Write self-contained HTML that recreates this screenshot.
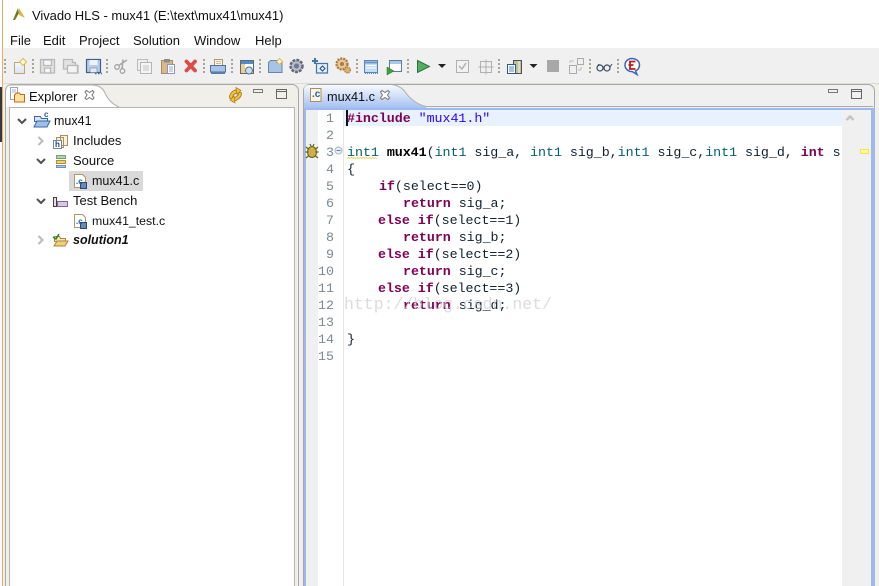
<!DOCTYPE html>
<html><head><meta charset="utf-8"><style>
html,body{margin:0;padding:0;width:879px;height:586px;overflow:hidden;background:#f0f0f0}
*{box-sizing:border-box}
#w{position:relative;width:879px;height:586px;overflow:hidden;background:#f0efe9}
.a{position:absolute;white-space:pre}
.u{font:13px/16px "Liberation Sans",sans-serif;color:#111}
.m{font:13.33px/17px "Liberation Mono",monospace;color:#10202c;letter-spacing:-.04px}
.n{font:13.33px/17px "Liberation Mono",monospace;color:#7d8890;width:16px;text-align:right;left:318px}
b{font-weight:bold;color:#000}
.k{color:#7f0055;font-weight:bold}
.t{color:#005f6a}
.s{color:#2a00ff}
</style></head><body><div id="w">
<div class="a" style="left:0;top:0;width:879px;height:48px;background:#fff"></div>
<div class="a" style="left:0;top:48px;width:879px;height:35px;background:#f0f0f0"></div>
<div class="a" style="left:0;top:83px;width:879px;height:1px;background:#dddcd4"></div>
<div class="a" style="left:0;top:48px;width:2px;height:538px;background:#fbfbfb"></div>
<div class="a" style="left:0;top:87px;width:2px;height:55px;background:#38383a"></div>
<div class="a" style="left:2px;top:0;width:1px;height:586px;background:#e8ac68"></div>
<div class="a u" style="left:32px;top:8px;letter-spacing:-.05px">Vivado HLS - mux41 (E:\text\mux41\mux41)</div>
<div class="a u" style="left:10px;top:33px">File</div>
<div class="a u" style="left:43px;top:33px">Edit</div>
<div class="a u" style="left:79px;top:33px">Project</div>
<div class="a u" style="left:133px;top:33px">Solution</div>
<div class="a u" style="left:194px;top:33px">Window</div>
<div class="a u" style="left:255px;top:33px">Help</div>

<!-- left panel -->
<div class="a" style="left:5px;top:84px;width:294px;height:520px;background:#f0efe9;border:1px solid #a8a8a8;border-radius:7px 7px 0 0"></div>
<div class="a" style="left:9px;top:107px;width:286px;height:500px;background:#fff;border:1px solid #b4b4b4"></div>
<!-- right panel -->
<div class="a" style="left:303px;top:84px;width:572px;height:520px;background:#f0f0f0;border:1px solid #a8a8a8;border-radius:7px 7px 0 0"></div>
<div class="a" style="left:304px;top:108px;width:2px;height:478px;background:#9db9ee"></div>
<div class="a" style="left:304px;top:108px;width:571px;height:2px;background:#9db9ee"></div>
<div class="a" style="left:871px;top:108px;width:4px;height:478px;background:#9db9ee"></div>
<div class="a" style="left:306px;top:110px;width:12px;height:476px;background:#f0f0f0"></div>
<div class="a" style="left:318px;top:110px;width:553px;height:476px;background:#fff"></div>
<div class="a" style="left:343px;top:110px;width:1px;height:476px;background:#e6e6e6"></div>
<div class="a" style="left:344px;top:110px;width:498px;height:16px;background:#e8f2fe"></div>
<div class="a" style="left:842px;top:110px;width:29px;height:476px;background:#f0f0f0"></div>

<svg class="a" style="left:0;top:0" width="879" height="586" viewBox="0 0 879 586" fill="none">
<defs><linearGradient id="tg" x1="0" y1="0" x2="0" y2="1"><stop offset="0" stop-color="#f8fafe"/><stop offset="1" stop-color="#a4c0f2"/></linearGradient>
<linearGradient id="pg" x1="0" y1="0" x2="0" y2="1"><stop offset="0" stop-color="#f6f8fc"/><stop offset="1" stop-color="#d8e4f4"/></linearGradient></defs>
<!-- logo -->
<path d="M13 20 L18 8 L19 13 L15 20Z" fill="#6e7a20"/><path d="M19 8 L25 18 L19 15Z" fill="#d8b840"/>
<!-- grips -->
<g fill="#a8a498"><path d="M4 59h2v2h-2zM4 63h2v2h-2zM4 67h2v2h-2zM4 71h2v2h-2z"/>
<path d="M32 59h2v2h-2zM32 63h2v2h-2zM32 67h2v2h-2zM32 71h2v2h-2z"/>
<path d="M106 59h2v2h-2zM106 63h2v2h-2zM106 67h2v2h-2zM106 71h2v2h-2z"/>
<path d="M203 59h2v2h-2zM203 63h2v2h-2zM203 67h2v2h-2zM203 71h2v2h-2z"/>
<path d="M231 59h2v2h-2zM231 63h2v2h-2zM231 67h2v2h-2zM231 71h2v2h-2z"/>
<path d="M259 59h2v2h-2zM259 63h2v2h-2zM259 67h2v2h-2zM259 71h2v2h-2z"/>
<path d="M356 59h2v2h-2zM356 63h2v2h-2zM356 67h2v2h-2zM356 71h2v2h-2z"/>
<path d="M407 59h2v2h-2zM407 63h2v2h-2zM407 67h2v2h-2zM407 71h2v2h-2z"/>
<path d="M498 59h2v2h-2zM498 63h2v2h-2zM498 67h2v2h-2zM498 71h2v2h-2z"/>
<path d="M589 59h2v2h-2zM589 63h2v2h-2zM589 67h2v2h-2zM589 71h2v2h-2z"/>
<path d="M617 59h2v2h-2zM617 63h2v2h-2zM617 67h2v2h-2zM617 71h2v2h-2z"/></g>
<!-- new -->
<path d="M14.500 62.500h10v11h-10z" fill="url(#pg)" stroke="#b8a878"/><path d="M23 58.500l3.500 3.500-3.500 3.500-3.500-3.500z" fill="#fff8d8" stroke="#e0b850"/>
<!-- save disabled -->
<g stroke="#b8b8b8" fill="#e2e2e2" stroke-width="1.300"><path d="M40.500 59.500h14v13.500h-14z"/><path d="M43.500 60h8v5.500h-8zM44.500 68h6v5h-6z" fill="#f6f6f6"/>
<path d="M63.500 59.500h9v3h3v3h2.500v7.500h-10v-4h-4.500z"/><path d="M67.500 65.500h10v7.500h-10z" fill="#f3f3f3"/></g>
<!-- save as -->
<path d="M86.500 59.500h14v13h-14z" fill="#b8cce4" stroke="#3f5f8c" stroke-width="1.200"/><path d="M89.500 60h8v5h-8z" fill="#eef2f8"/><path d="M90 68h7v4.500h-7z" fill="#e4e8f0" stroke="#60789c" stroke-width=".5"/><path d="M95 73.500h1.500M98 73.500h1.500M101 73.500h1" stroke="#3f5f8c" stroke-width="1.500"/>
<!-- cut -->
<path d="M118.500 65.500L127 60M122 69L123 59.500" stroke="#a8a8a8" stroke-width="1.600"/><circle cx="117" cy="67" r="2.300" stroke="#a4a4a4" stroke-width="1.300"/><circle cx="122.500" cy="71" r="2.300" stroke="#a4a4a4" stroke-width="1.300"/>
<!-- copy -->
<path d="M137.500 59.500h10v11h-10z" fill="#eee" stroke="#bbb"/><path d="M140.500 62.500h11v11h-11z" fill="#f4f4f4" stroke="#b5b5b5"/><path d="M143 66h6M143 68h6M143 70h6" stroke="#c4c4c4"/>
<!-- paste -->
<path d="M161.500 60.500h11v13h-11z" fill="#dcb888" stroke="#a88c60"/><path d="M164 59h6v3.500h-6z" fill="#8c8c8c"/><path d="M167.500 64.500h7v9h-7z" fill="#fff" stroke="#8898b8"/><path d="M169 67h4M169 69h4M169 71h4" stroke="#7890b8" stroke-width=".7"/>
<!-- delete -->
<path d="M186.500 61.500L195 70.500M195 61.500L186.500 70.500" stroke="#dc4a4a" stroke-width="3.800" stroke-linecap="round"/>
<!-- print -->
<path d="M214.500 59.500h8v6h-8z" fill="#fff6dc" stroke="#a89870"/><path d="M216 61.500h5M216 63.500h5" stroke="#b8a888" stroke-width=".7"/><path d="M210.500 65.500h15v6.500h-15z" fill="#a8c4e8" stroke="#50709c"/><path d="M211 72h14v2h-14z" fill="#5a7cac"/>
<!-- layout -->
<path d="M240.500 60.500h13v13h-13z" fill="#fff" stroke="#666"/><path d="M241 61h12v3h-12z" fill="#4f8ad0"/><path d="M241 64h4v9h-4z" fill="#e8d090"/><circle cx="249" cy="70.500" r="3.500" fill="#c8e0f0" stroke="#507090"/>
<!-- new folder -->
<path d="M268.500 62.500l2-2h6v2h5.500v10h-13.500z" fill="#a8c4e4" stroke="#6c84a8"/><path d="M279.500 58.500l3 3-3 3-3-3z" fill="#fff8d8" stroke="#e0b850"/>
<!-- gear -->
<circle cx="296.500" cy="66" r="6" fill="#b8bcc8" stroke="#606676" stroke-width="2.400" stroke-dasharray="2.800 1.200"/><circle cx="296.500" cy="66" r="2.500" fill="#707890"/>
<!-- csim -->
<path d="M316.500 63.500h11v9.500h-11z" fill="#e4f0ff" stroke="#4874a8" stroke-width="1.200"/><path d="M312 61h6M315 58v6" stroke="#4874a8" stroke-width="2"/><path d="M320 68.500l2.500-2.500 2.500 2.500-2.500 2.500z" stroke="#204880"/>
<!-- gear2 -->
<circle cx="342" cy="64" r="5.500" fill="#e8c890" stroke="#a87838" stroke-width="2.200" stroke-dasharray="2 1"/><circle cx="342" cy="64" r="2" fill="#a08050"/><circle cx="347.500" cy="70" r="3" fill="#d8b070" stroke="#a87838" stroke-dasharray="1.500 .7"/>
<!-- 365 -->
<path d="M364.500 60.500h13v12h-13z" fill="#c4dcf4" stroke="#5884b8"/><path d="M365 62.500h12" stroke="#6c94c4" stroke-width="2"/><path d="M366 65.500h10M366 68h10" stroke="#fff"/><path d="M365 73.500h13" stroke="#5884b8" stroke-dasharray="1 1"/>
<!-- run cfg -->
<path d="M389.500 60.500h12v11h-12z" fill="#fff" stroke="#5c7c9c"/><path d="M390 61h11v3h-11z" fill="#a8c8e8"/><path d="M387 67l7 4-7 4z" fill="#40a040" stroke="#287028" stroke-width=".5"/>
<!-- run -->
<path d="M417.500 60.500l12 6-12 6z" fill="#50b060" stroke="#307040"/>
<path d="M438 64h8l-4 4z" fill="#222"/>
<path d="M456.500 60.500h12v12h-12z" fill="#f2f2f2" stroke="#b0b0b0"/><path d="M459 66l3 3 4-6" stroke="#b0b0b0" stroke-width="1.500"/>
<path d="M480.500 61.500h11v11h-11zM486 59.500v15M478.500 67h15" stroke="#b0b0b0"/>
<!-- doc -->
<path d="M513.500 60.500h8v13h-8z" fill="#c0c098" stroke="#505050"/><path d="M519 61v12" stroke="#e8e8d8" stroke-width="1.500"/><path d="M507.500 64.500h8v9h-8z" fill="#fff" stroke="#2858a0"/><path d="M509 67h5M509 69h5M509 71h5" stroke="#2858a0" stroke-width=".8"/>
<path d="M529.500 64h8l-4 4z" fill="#222"/>
<rect x="547" y="60" width="12" height="12" fill="#a8a8a8"/>
<path d="M569.500 65.500h7v8h-7zM577.500 58.500h6v6h-6z" stroke="#aaa"/><path d="M570 63v-2h4M581 67v3h-3" stroke="#bbb"/>
<!-- glasses -->
<circle cx="600" cy="68" r="3" stroke="#38485c" stroke-width="1.200"/><circle cx="607" cy="68" r="3" stroke="#38485c" stroke-width="1.200"/><path d="M603 67h1M610 67l2-3M597 67l2-3" stroke="#38485c"/>
<!-- bubble -->
<path d="M632 58.500c4.500 0 7.500 3 7.500 6.500 0 3-2 5-4 6l1.500 3.500-4.500-2.800c-4.500 0-7.500-3-7.500-6.700 0-3.500 3-6.500 7-6.500z" fill="#fff" stroke="#3c64b0" stroke-width="1.500"/><path d="M635.500 61.500h-5.500v7.500h5.500M628.500 65h5" stroke="#c81818" stroke-width="1.800"/>

<!-- left tab -->
<path d="M6 108V90q0-5 5-5h81q8 0 12 6 5 12 15 16H6z" fill="#fff"/>
<path d="M6 90q0-5 5-5h81q8 0 12 6 5 12 15 16" stroke="#b0b0b0"/>
<path d="M10.500 87.500h7v12h-7z" fill="#fff" stroke="#a0a0b8"/><path d="M12 90h4M12 92h4" stroke="#80a0c8" stroke-width=".8"/><path d="M14.500 95l2-2h3l1 1.500h4v7.500h-10z" fill="#fce0a0" stroke="#c06a18"/>
<path d="M86.500 90.500l3 2 3-2 1.500 1.500-2 3 2 3-1.500 1.500-3-2-3 2-1.500-1.500 2-3-2-3z" fill="#fff" stroke="#777"/>
<!-- sync -->
<g stroke-linecap="round"><path d="M231 97q1-5 7-6M240 94q-1 4-7 6" stroke="#a87818" stroke-width="4"/><path d="M231 97q1-5 7-6M240 94q-1 4-7 6" stroke="#f0c040" stroke-width="2.400"/></g>
<path d="M236 87.500l5 3-4 4zM235 103l-5-3 4-4z" fill="#f0c040" stroke="#a87818" stroke-width=".7"/>
<!-- min/max left -->
<path d="M253.500 89.500h9v3h-9z" stroke="#777"/><path d="M276.500 89.500h10v9h-10z" stroke="#666"/><path d="M276 91.500h10" stroke="#666"/>
<!-- right tab -->
<path d="M304 108V90q0-5 5-5h81q8 0 14 6 9 13 22 16v1z" fill="url(#tg)"/>
<path d="M390 84.500q8 0 14 6 9 13 22 16h447" stroke="#acacac"/>
<path d="M310.500 88.500h10.500v13h-10.500z" fill="#fdf8ec" stroke="#b09050"/>
<path d="M382 90.500l3 2 3-2 1.500 1.500-2 3 2 3-1.500 1.500-3-2-3 2-1.500-1.500 2-3-2-3z" fill="#fff" stroke="#777"/>
<path d="M828.500 89.500h9v3h-9z" stroke="#777"/><path d="M851.500 89.500h10v9h-10z" stroke="#666"/><path d="M851 91.500h10" stroke="#666"/>
<!-- tree arrows -->
<path d="M18 119l4 4 4-4M37 159l4 4 4-4M37 199l4 4 4-4" stroke="#505050" stroke-width="2"/>
<path d="M38.500 137l4 4-4 4M38.500 236l4 4-4 4" stroke="#bbb" stroke-width="2"/>
<rect x="69" y="171" width="74" height="20" fill="#d9d9d9"/>
<!-- tree icons -->
<path d="M34.500 116.500h6l1 2h6v3h-13z" fill="#d8e4f4" stroke="#3868a0"/><path d="M34 127l3-6h13l-3 6z" fill="#a0c0e8" stroke="#3868a0"/>
<path d="M60.500 135.500h7v10h-7zM56.500 137.500h7v10h-7z" fill="#f8f0d8" stroke="#a89060"/><path d="M53.500 140.500h8v8h-8z" fill="#fff" stroke="#7088a8"/>
<path d="M56.500 155.500h9v3h-9z" fill="#a8d8b0" stroke="#80a070"/><path d="M56.500 160.500h9v3h-9z" fill="#f0d080" stroke="#b09030"/><path d="M56.500 165.500h9v2h-9z" fill="#a8c8e8" stroke="#7090b0"/>
<path d="M74.500 174.500h8l3 3v10h-11z" fill="#fff" stroke="#b0986c"/><path d="M80.500 182.500h6v6h-6z" fill="#6888b8" stroke="#284878"/>
<path d="M53.500 197.500h3v9h-3z" stroke="#503840" fill="#e8e0e0"/><path d="M57.500 201.500h10v5h-10z" fill="#d8c8e8" stroke="#806890"/>
<path d="M74.500 214.500h8l3 3v10h-11z" fill="#fff" stroke="#b0986c"/><path d="M80.500 222.500h6v6h-6z" fill="#6888b8" stroke="#284878"/>
<path d="M54.500 236.500h5l1 2h5v3h-11z" fill="#f8e8b8" stroke="#a88838"/><path d="M54 246l3-5h11l-3 5z" fill="#f0d080" stroke="#a88838"/><path d="M53 237l3 2 3-5" stroke="#208830" stroke-width="1.500"/>
<!-- bug -->
<ellipse cx="312" cy="152" rx="4.500" ry="5.500" fill="#d0b040" stroke="#606020"/><path d="M306 147l3 2.500M318 147l-3 2.500M305.500 152h3M318.500 152h-3M306 158l3-2.500M318 158l-3-2.500M310 144l1 2M314 144l-1 2" stroke="#606020" stroke-width="1.200"/>
<!-- fold -->
<circle cx="338.500" cy="150.500" r="3.500" fill="#e8eef4" stroke="#a8b8c8"/><path d="M336.500 150.500h4" stroke="#708090"/>
<!-- squiggle -->
<path d="M347 158.500l1.500-1 1.500 1 1.500-1 1.500 1 1.500-1 1.500 1 1.500-1 1.500 1 1.500-1 1.500 1 1.500-1 1.500 1 1.500-1 1.500 1 1.500-1 1.500 1 1.500-1 1.500 1 1.500-1 1.500 1" stroke="#e8d040" stroke-width=".8"/>
<!-- scroll -->
<path d="M846.500 120l3.500-3.500 3.500 3.500" stroke="#c4c4c4" stroke-width="2.500"/>
<rect x="860.500" y="149.500" width="8" height="4" fill="#fff8a0" stroke="#f0e840"/>
<!-- caret -->
<rect x="346" y="110" width="2" height="16" fill="#111"/>
</svg>

<div class="a" style="left:312px;top:89px;font:bold 10px/12px 'Liberation Sans',sans-serif;color:#2060a0">.c</div>
<div class="a" style="left:44px;top:110px;font:bold 8px/10px 'Liberation Sans',sans-serif;color:#2858a0">c</div>
<div class="a" style="left:55px;top:140px;font:bold 8px/10px 'Liberation Sans',sans-serif;color:#204080">h</div>
<div class="a" style="left:76px;top:177px;font:bold 8px/10px 'Liberation Sans',sans-serif;color:#2060a0">.c</div>
<div class="a" style="left:76px;top:217px;font:bold 8px/10px 'Liberation Sans',sans-serif;color:#2060a0">.c</div>
<div class="a u" style="left:29px;top:89px">Explorer</div>
<div class="a u" style="left:327px;top:89px;font-size:12.700px">mux41.c</div>
<div class="a u" style="left:54px;top:113px;font-size:12.500px">mux41</div>
<div class="a u" style="left:73px;top:133px">Includes</div>
<div class="a u" style="left:73px;top:153px">Source</div>
<div class="a u" style="left:92px;top:173px;font-size:12.500px">mux41.c</div>
<div class="a u" style="left:73px;top:193px">Test Bench</div>
<div class="a u" style="left:92px;top:213px;font-size:12.300px">mux41_test.c</div>
<div class="a u" style="left:73px;top:232px;font-size:12.500px;font-weight:bold;font-style:italic">solution1</div>

<div class="a n" style="top:111px">1</div><div class="a n" style="top:128px">2</div><div class="a n" style="top:145px">3</div><div class="a n" style="top:162px">4</div><div class="a n" style="top:179px">5</div><div class="a n" style="top:196px">6</div><div class="a n" style="top:213px">7</div><div class="a n" style="top:230px">8</div><div class="a n" style="top:247px">9</div><div class="a n" style="top:264px">10</div><div class="a n" style="top:281px">11</div><div class="a n" style="top:298px">12</div><div class="a n" style="top:315px">13</div><div class="a n" style="top:332px">14</div><div class="a n" style="top:349px">15</div>

<div class="a" style="left:347px;top:111px;width:495px;height:260px;overflow:hidden">
<div class="a m" style="left:0;top:0"><span class="k">#include</span> <span class="s">"mux41.h"</span></div>
<div class="a m" style="left:0;top:34px"><span class="t">int1</span> <b>mux41</b>(<span class="t">int1</span> sig_a, <span class="t">int1</span> sig_b,<span class="t">int1</span> sig_c,<span class="t">int1</span> sig_d, <span class="k">int</span> s</div>
<div class="a m" style="left:0;top:51px">{</div>
<div class="a m" style="left:32px;top:68px"><span class="k">if</span>(select==0)</div>
<div class="a m" style="left:56px;top:85px"><span class="k">return</span> sig_a;</div>
<div class="a m" style="left:31px;top:102px"><span class="k">else if</span>(select==1)</div>
<div class="a m" style="left:56px;top:119px"><span class="k">return</span> sig_b;</div>
<div class="a m" style="left:31px;top:136px"><span class="k">else if</span>(select==2)</div>
<div class="a m" style="left:56px;top:153px"><span class="k">return</span> sig_c;</div>
<div class="a m" style="left:31px;top:170px"><span class="k">else if</span>(select==3)</div>
<div class="a m" style="left:56px;top:187px"><span class="k">return</span> sig_d;</div>
<div class="a m" style="left:0;top:221px">}</div>
</div>
<div class="a" style="left:344px;top:295px;font:16.500px/20px 'Liberation Mono',monospace;color:rgba(205,205,205,.7)">http://blog.csdn.net/</div>
</div></body></html>
